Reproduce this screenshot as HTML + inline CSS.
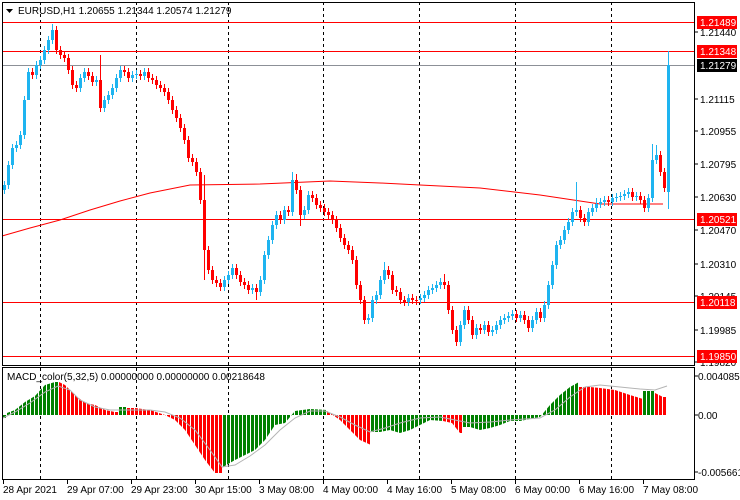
<!DOCTYPE html>
<html><head><meta charset="utf-8"><style>
html,body{margin:0;padding:0;background:#fff;width:740px;height:500px;overflow:hidden}
svg{display:block;font-family:"Liberation Sans",sans-serif}
</style></head><body>
<svg width="740" height="500" viewBox="0 0 740 500" xmlns="http://www.w3.org/2000/svg">
<defs>
<pattern id="gap" x="0" y="0" width="4" height="10" patternUnits="userSpaceOnUse"><rect x="2" y="0" width="1" height="10" fill="#fff"/></pattern>
</defs>
<g stroke="#000" stroke-dasharray="3,3">
<line x1="40.5" y1="2" x2="40.5" y2="479"/><line x1="136.5" y1="2" x2="136.5" y2="479"/><line x1="228.5" y1="2" x2="228.5" y2="479"/><line x1="323.5" y1="2" x2="323.5" y2="479"/><line x1="419.5" y1="2" x2="419.5" y2="479"/><line x1="515.5" y1="2" x2="515.5" y2="479"/><line x1="611.5" y1="2" x2="611.5" y2="479"/>
</g>
<g stroke="#f00"><line x1="2" y1="22.5" x2="694" y2="22.5"/><line x1="2" y1="51.5" x2="694" y2="51.5"/><line x1="2" y1="219.5" x2="694" y2="219.5"/><line x1="2" y1="302.5" x2="694" y2="302.5"/><line x1="2" y1="356.5" x2="694" y2="356.5"/></g>
<line x1="2" y1="65.5" x2="694" y2="65.5" stroke="#8c9097"/>
<polyline fill="none" stroke="#f00" points="2,236 30,228 60,220 90,210 120,201 150,193 190,185 260,184 330,181 380,183 420,185 480,188 540,195 600,204 663,204"/>

<!-- blue candles -->
<path fill="none" stroke="#1eb4f0" d="M4.5 181v13M8.5 161v28M12.5 144v25M16.5 141v11M20.5 131v18M24.5 96v43M28.5 68v32M36.5 61v18M40.5 56v13M44.5 46v18M48.5 36v18M52.5 24v20M80.5 74v18M84.5 68v14M96.5 76v10M104.5 96v16M108.5 91v13M112.5 84v15M116.5 74v18M120.5 66v16M132.5 71v11M136.5 70v9M144.5 68v12M224.5 276v15M228.5 271v13M232.5 264v15M252.5 284v10M260.5 276v20M264.5 251v33M268.5 236v23M272.5 221v23M276.5 211v18M284.5 206v18M292.5 172v44M304.5 206v13M308.5 191v23M368.5 314v10M372.5 296v26M376.5 291v13M380.5 276v23M384.5 262v22M408.5 294v12M420.5 294v10M424.5 291v11M428.5 286v13M432.5 284v10M436.5 281v11M440.5 278v11M460.5 321v25M464.5 306v23M476.5 324v15M484.5 321v13M492.5 326v10M496.5 321v13M500.5 316v13M504.5 314v10M508.5 312v10M512.5 310v10M520.5 311v11M532.5 316v16M536.5 308v16M544.5 301v21M548.5 281v28M552.5 261v28M556.5 241v28M560.5 236v13M564.5 226v18M568.5 218v16M572.5 208v18M576.5 182v34M588.5 208v18M592.5 204v12M596.5 198v14M600.5 198v10M604.5 196v10M612.5 194v12M616.5 193v9M620.5 192v9M624.5 190v10M628.5 188v10M636.5 192v9M648.5 194v18M652.5 144v58M656.5 145v19M668.5 51V209"/>
<path fill="#1eb4f0" d="M3 185h3v5h-3zM7 165h3v20h-3zM11 148h3v17h-3zM15 145h3v3h-3zM19 135h3v10h-3zM23 100h3v35h-3zM27 72h3v28h-3zM35 65h3v10h-3zM39 60h3v5h-3zM43 50h3v10h-3zM47 40h3v10h-3zM51 30h3v10h-3zM79 78h3v10h-3zM83 72h3v6h-3zM95 80h3v2h-3zM103 100h3v8h-3zM107 95h3v5h-3zM111 88h3v7h-3zM115 78h3v10h-3zM119 70h3v8h-3zM131 75h3v3h-3zM135 74h3v1h-3zM143 72h3v4h-3zM223 280h3v7h-3zM227 275h3v5h-3zM231 268h3v7h-3zM251 288h3v2h-3zM259 280h3v12h-3zM263 255h3v25h-3zM267 240h3v15h-3zM271 225h3v15h-3zM275 215h3v10h-3zM283 210h3v10h-3zM291 180h3v32h-3zM303 210h3v5h-3zM307 195h3v15h-3zM367 318h3v2h-3zM371 300h3v18h-3zM375 295h3v5h-3zM379 280h3v15h-3zM383 270h3v10h-3zM407 298h3v4h-3zM419 298h3v2h-3zM423 295h3v3h-3zM427 290h3v5h-3zM431 288h3v2h-3zM435 285h3v3h-3zM439 282h3v3h-3zM459 325h3v17h-3zM463 310h3v15h-3zM475 328h3v7h-3zM483 325h3v5h-3zM491 330h3v2h-3zM495 325h3v5h-3zM499 320h3v5h-3zM503 318h3v2h-3zM507 316h3v2h-3zM511 314h3v2h-3zM519 315h3v3h-3zM531 320h3v8h-3zM535 312h3v8h-3zM543 305h3v13h-3zM547 285h3v20h-3zM551 265h3v20h-3zM555 245h3v20h-3zM559 240h3v5h-3zM563 230h3v10h-3zM567 222h3v8h-3zM571 212h3v10h-3zM575 210h3v2h-3zM587 212h3v10h-3zM591 208h3v4h-3zM595 204h3v4h-3zM599 202h3v2h-3zM603 200h3v2h-3zM611 198h3v4h-3zM615 197h3v1h-3zM619 196h3v1h-3zM623 194h3v2h-3zM627 192h3v2h-3zM635 196h3v1h-3zM647 198h3v10h-3zM651 160h3v38h-3zM655 155h3v5h-3zM667 65h3v127h-3z"/>
<!-- red candles -->
<path fill="none" stroke="#f00" d="M32.5 68v11M56.5 26v28M60.5 46v13M64.5 51v11M68.5 54v20M72.5 66v23M76.5 81v11M88.5 68v12M92.5 72v14M100.5 55v57M124.5 66v10M128.5 68v14M140.5 70v10M148.5 68v14M152.5 74v10M156.5 76v13M160.5 81v11M164.5 84v12M168.5 88v16M172.5 96v18M176.5 106v16M180.5 114v18M184.5 124v20M188.5 136v26M192.5 154v12M196.5 158v18M200.5 168v36M204.5 175v105M208.5 246v28M212.5 266v18M216.5 276v11M220.5 279v12M236.5 264v15M240.5 271v15M244.5 278v11M248.5 281v13M256.5 284v16M280.5 211v13M288.5 206v10M296.5 174v20M300.5 186v40M312.5 191v11M316.5 194v15M320.5 201v11M324.5 204v12M328.5 208v11M332.5 211v13M336.5 216v16M340.5 224v18M344.5 234v15M348.5 241v13M352.5 246v18M356.5 256v33M360.5 281v23M364.5 296v28M388.5 266v13M392.5 271v23M396.5 286v10M400.5 288v16M404.5 296v10M412.5 294v10M416.5 296v9M444.5 274v15M448.5 281v33M452.5 306v28M456.5 326v20M468.5 306v18M472.5 316v23M480.5 324v10M488.5 321v15M516.5 310v12M524.5 311v13M528.5 316v16M540.5 308v14M580.5 206v16M584.5 214v12M608.5 196v10M632.5 188v13M640.5 192v12M644.5 196v16M660.5 151v25M664.5 168v24"/>
<path fill="#f00" d="M31 72h3v3h-3zM55 30h3v20h-3zM59 50h3v5h-3zM63 55h3v3h-3zM67 58h3v12h-3zM71 70h3v15h-3zM75 85h3v3h-3zM87 72h3v4h-3zM91 76h3v6h-3zM99 80h3v28h-3zM123 70h3v2h-3zM127 72h3v6h-3zM139 74h3v2h-3zM147 72h3v6h-3zM151 78h3v2h-3zM155 80h3v5h-3zM159 85h3v3h-3zM163 88h3v4h-3zM167 92h3v8h-3zM171 100h3v10h-3zM175 110h3v8h-3zM179 118h3v10h-3zM183 128h3v12h-3zM187 140h3v18h-3zM191 158h3v4h-3zM195 162h3v10h-3zM199 172h3v28h-3zM203 200h3v50h-3zM207 250h3v20h-3zM211 270h3v10h-3zM215 280h3v3h-3zM219 283h3v4h-3zM235 268h3v7h-3zM239 275h3v7h-3zM243 282h3v3h-3zM247 285h3v5h-3zM255 288h3v4h-3zM279 215h3v5h-3zM287 210h3v2h-3zM295 180h3v10h-3zM299 190h3v25h-3zM311 195h3v3h-3zM315 198h3v7h-3zM319 205h3v3h-3zM323 208h3v4h-3zM327 212h3v3h-3zM331 215h3v5h-3zM335 220h3v8h-3zM339 228h3v10h-3zM343 238h3v7h-3zM347 245h3v5h-3zM351 250h3v10h-3zM355 260h3v25h-3zM359 285h3v15h-3zM363 300h3v20h-3zM387 270h3v5h-3zM391 275h3v15h-3zM395 290h3v2h-3zM399 292h3v8h-3zM403 300h3v2h-3zM411 298h3v2h-3zM415 300h3v1h-3zM443 282h3v3h-3zM447 285h3v25h-3zM451 310h3v20h-3zM455 330h3v12h-3zM467 310h3v10h-3zM471 320h3v15h-3zM479 328h3v2h-3zM487 325h3v7h-3zM515 314h3v4h-3zM523 315h3v5h-3zM527 320h3v8h-3zM539 312h3v6h-3zM579 210h3v8h-3zM583 218h3v4h-3zM607 200h3v2h-3zM631 192h3v5h-3zM639 196h3v4h-3zM643 200h3v8h-3zM659 155h3v17h-3zM663 172h3v16h-3z"/>

<!-- MACD histogram -->
<g>
<path fill="#008000" d="M3 415V418H7V413L15 410L25 402L35 396L45 385L55 382L59 382V415Z"/>
<path fill="#f00" d="M59 415V382L65 385L75 395L85 403L95 405L105 410L115 412L119 412V415Z"/>
<path fill="#008000" d="M119 415V407H127V415Z"/>
<path fill="#f00" d="M127 415V408L135 408L150 410L165 415L175 420L185 430L195 445L205 460L215 473L223 473V415Z"/>
<path fill="#008000" d="M223 415V467L235 460L245 455L255 450L265 440L275 425L285 423L295 411L310 409L327 410V415Z"/>
<path fill="#f00" d="M327 415V411L340 420L350 430L360 440L371 445V415Z"/>
<path fill="#008000" d="M371 415V432L380 432L390 430L400 433L410 430L420 425L430 420L443 421V415Z"/>
<path fill="#f00" d="M443 415V421L452 423L460 433L463 433V415Z"/>
<path fill="#008000" d="M463 415V427L470 427L480 430L490 428L500 425L510 421L520 421L530 419L540 417L550 405L560 395L570 387L579 382V415Z"/>
<path fill="#f00" d="M579 415V387L590 387L600 388L615 390L630 395L643 399V415Z"/>
<path fill="#008000" d="M643 415V391H655V415Z"/>
<path fill="#f00" d="M655 415V393L663 397L667 397V415Z"/>
<rect x="3" y="375" width="665" height="100" fill="url(#gap)"/>
</g>
<polyline fill="none" stroke="#b4b4b4" points="3,418 15,412 30,403 45,392 58,386 70,390 80,400 95,407 110,410 130,410 150,410 165,412 180,418 195,430 210,450 222,467 235,465 250,456 265,445 280,430 295,418 310,411 325,411 340,417 355,425 370,432 385,428 400,423 420,418 440,417 455,420 470,423 490,422 510,420 540,418 555,410 570,397 585,387 600,385 620,387 640,389 655,390 667,386"/>

<rect x="2.5" y="2.5" width="692" height="363" fill="none" stroke="#000"/>
<rect x="2.5" y="367.5" width="692" height="112" fill="none" stroke="#000"/>
<path d="M6 9L13 9L9.5 13Z" fill="#000"/>
<text x="18" y="14" font-size="10" fill="#000">EURUSD,H1  1.20655 1.21344 1.20574 1.21279</text>
<text x="7" y="380" font-size="10" fill="#000">MACD_color(5,32,5) 0.00000000 0.00000000 0.00218648</text>

<g font-size="10" fill="#000" stroke="none">
<text x="700" y="36">1.21440</text><text x="700" y="103">1.21115</text><text x="700" y="135">1.20955</text><text x="700" y="168">1.20795</text><text x="700" y="201">1.20630</text><text x="700" y="234">1.20470</text><text x="700" y="268">1.20310</text><text x="700" y="300">1.20145</text><text x="700" y="334">1.19985</text><text x="700" y="366">1.19820</text>
<text x="698" y="380">0.0040852</text><text x="698" y="419">0.00</text><text x="698" y="476">-0.005661</text>
</g>
<g stroke="#000"><path d="M694 32h4M694 99h4M694 131h4M694 164h4M694 197h4M694 230h4M694 264h4M694 296h4M694 330h4M694 362h4M694 376h4M694 415h4M694 472h4"/></g>
<rect x="697" y="16" width="40" height="13" fill="#f00"/><text x="700" y="26" font-size="10" fill="#fff">1.21489</text>
<rect x="697" y="45" width="40" height="13" fill="#f00"/><text x="700" y="55" font-size="10" fill="#fff">1.21348</text>
<rect x="697" y="59" width="40" height="13" fill="#000"/><text x="700" y="69" font-size="10" fill="#fff">1.21279</text>
<rect x="697" y="213" width="40" height="13" fill="#f00"/><text x="700" y="223" font-size="10" fill="#fff">1.20521</text>
<rect x="697" y="296" width="40" height="13" fill="#f00"/><text x="700" y="306" font-size="10" fill="#fff">1.20118</text>
<rect x="697" y="350" width="40" height="13" fill="#f00"/><text x="700" y="360" font-size="10" fill="#fff">1.19850</text>

<g stroke="#000"><path d="M3.5 480v4M67.5 480v4M131.5 480v4M195.5 480v4M259.5 480v4M323.5 480v4M387.5 480v4M451.5 480v4M515.5 480v4M579.5 480v4M643.5 480v4"/></g>
<g font-size="10" fill="#000">
<text x="3" y="493">28 Apr 2021</text><text x="67" y="493">29 Apr 07:00</text><text x="131" y="493">29 Apr 23:00</text><text x="195" y="493">30 Apr 15:00</text><text x="259" y="493">3 May 08:00</text><text x="323" y="493">4 May 00:00</text><text x="387" y="493">4 May 16:00</text><text x="451" y="493">5 May 08:00</text><text x="515" y="493">6 May 00:00</text><text x="579" y="493">6 May 16:00</text><text x="643" y="493">7 May 08:00</text>
</g>
</svg>
</body></html>
